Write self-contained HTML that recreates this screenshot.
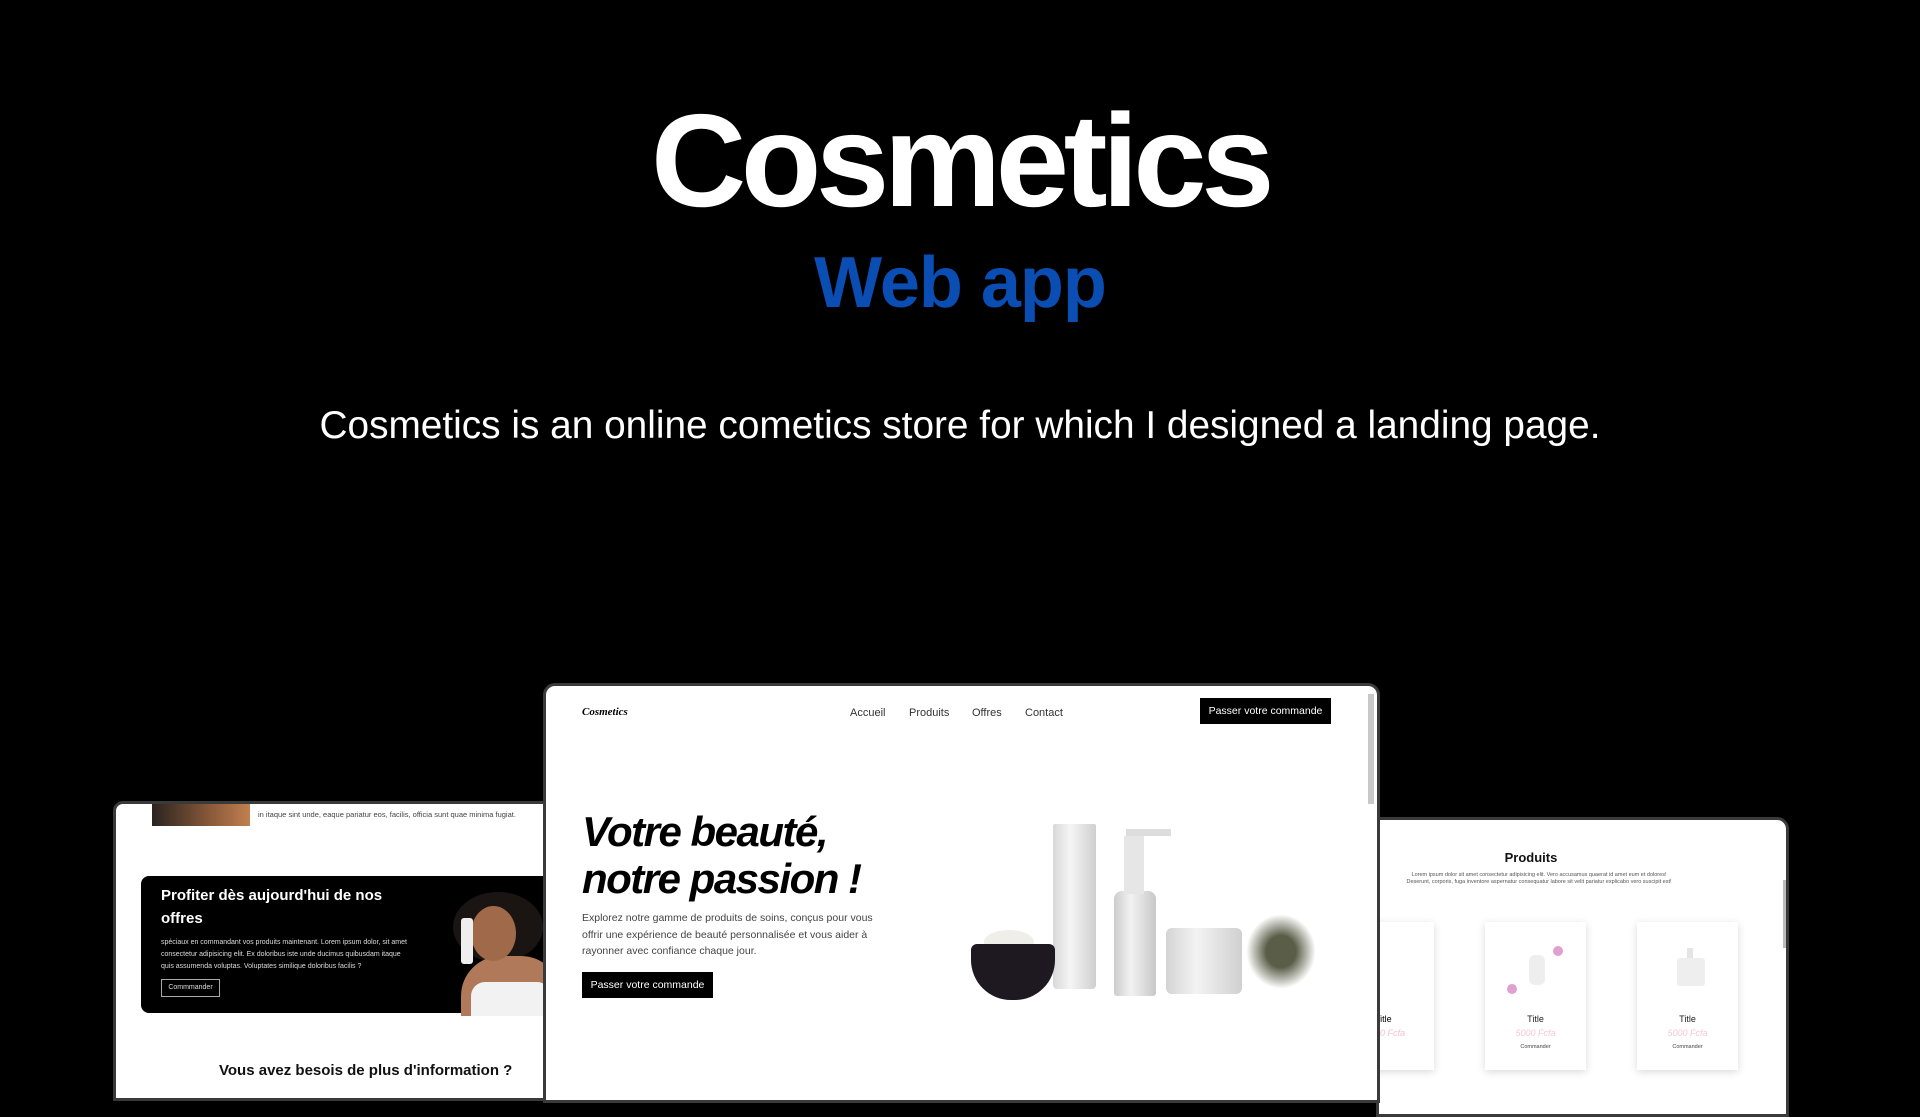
<!DOCTYPE html>
<html><head><meta charset="utf-8"><style>
*{margin:0;padding:0;box-sizing:border-box}
body{width:1920px;height:1080px;background:#000;overflow:hidden;position:relative;font-family:"Liberation Sans","DejaVu Sans",sans-serif}
.abs{position:absolute}
#t1{left:0;width:1920px;top:86px;text-align:center;color:#fff;font-weight:bold;font-size:132px;letter-spacing:-5.5px;line-height:150px}
#t2{left:0;width:1920px;top:238px;text-align:center;color:#0a4db3;font-weight:bold;font-size:72px;line-height:90px;letter-spacing:-1px}
#t3{left:0;width:1920px;top:398px;text-align:center;color:#fff;font-size:38.8px;line-height:56px}
.mock{background:#fff;border:3px solid #3a3a3a;overflow:hidden}
.nav{font-size:11px;color:#333}
</style></head><body>
<div class="abs" id="t1">Cosmetics</div>
<div class="abs" id="t2">Web app</div>
<div class="abs" id="t3">Cosmetics is an online cometics store for which I designed a landing page.</div>

<!-- left mock -->
<div class="abs mock" style="left:113px;top:801px;width:440px;height:300px;border-radius:10px 0 0 0">
  <div class="abs" style="left:36px;top:-10px;width:98px;height:32px;background:linear-gradient(90deg,#2a2320,#8a5a3a 60%,#c08050)"></div>
  <div class="abs" style="left:142px;top:6px;font-size:7.5px;color:#444;white-space:nowrap">in itaque sint unde, eaque pariatur eos, facilis, officia sunt quae minima fugiat.</div>
  <div class="abs" style="left:25px;top:72px;width:420px;height:137px;background:#000;border-radius:8px 0 0 8px">
    <div class="abs" style="left:20px;top:8px;color:#fff;font-weight:bold;font-size:15px;line-height:23px;width:240px">Profiter dès aujourd'hui de nos offres</div>
    <div class="abs" style="left:20px;top:61px;color:#ddd;font-size:7px;line-height:12px;width:250px">spéciaux en commandant vos produits maintenant. Lorem ipsum dolor, sit amet consectetur adipisicing elit. Ex doloribus iste unde ducimus quibusdam itaque quis assumenda voluptas. Voluptates similique doloribus facilis ?</div>
    <div class="abs" style="left:20px;top:103px;width:59px;height:18px;border:1px solid #aaa;color:#ddd;font-size:7px;line-height:16px;text-align:center">Commmander</div>
    <div class="abs" style="left:312px;top:16px;width:90px;height:70px;border-radius:50%;background:#1a1512"></div>
    <div class="abs" style="left:320px;top:80px;width:100px;height:60px;border-radius:40px 40px 0 0;background:#b07a5a"></div>
    <div class="abs" style="left:330px;top:106px;width:80px;height:34px;background:#f2f2f2;border-radius:14px 14px 0 0"></div>
    <div class="abs" style="left:330px;top:30px;width:45px;height:55px;border-radius:50%;background:#a06a4a"></div>
    <div class="abs" style="left:320px;top:42px;width:12px;height:46px;background:#eee;border-radius:3px"></div>
  </div>
  <div class="abs" style="left:103px;top:258px;font-weight:bold;font-size:15px;color:#111;white-space:nowrap">Vous avez besois de plus d'information ?</div>
</div>

<!-- right mock -->
<div class="abs mock" style="left:1376px;top:817px;width:413px;height:300px;border-radius:0 12px 0 0">
  <div class="abs" style="left:0;width:414px;top:30px;text-align:center;font-weight:bold;font-size:13px;color:#111;transform:translateX(-55px)">Produits</div>
  <div class="abs" style="left:20px;width:280px;top:52px;text-align:center;font-size:5.5px;line-height:7px;color:#555">Lorem ipsum dolor sit amet consectetur adipisicing elit. Vero accusamus quaerat id amet eum et dolores! Deserunt, corporis, fuga inventore aspernatur consequatur labore sit velit pariatur explicabo vero suscipit est!</div>
  <div class="abs" style="left:-40px;top:102px;width:95px;height:148px;background:#fff;box-shadow:0 2px 8px rgba(0,0,0,.15)">
    <div class="abs" style="left:36px;top:92px;font-size:9px;white-space:nowrap">Title</div>
    <div class="abs" style="left:26px;top:106px;font-size:9px;color:#f7c0cc;font-style:italic;white-space:nowrap">5000 Fcfa</div>
  </div>
  <div class="abs" style="left:106px;top:102px;width:101px;height:148px;background:#fff;box-shadow:0 2px 8px rgba(0,0,0,.15)">
    <div class="abs" style="left:44px;top:33px;width:16px;height:30px;background:#eee;border-radius:6px"></div>
    <div class="abs" style="left:68px;top:24px;width:10px;height:10px;border-radius:50%;background:#e0a0d0"></div>
    <div class="abs" style="left:22px;top:62px;width:10px;height:10px;border-radius:50%;background:#e0a0d0"></div>
    <div class="abs" style="left:0;width:101px;top:92px;text-align:center;font-size:9px;color:#222">Title</div>
    <div class="abs" style="left:0;width:101px;top:106px;text-align:center;font-size:9px;color:#f7c8d2;font-style:italic">5000 Fcfa</div>
    <div class="abs" style="left:0;width:101px;top:122px;text-align:center;font-size:5.5px;color:#444">Commander</div>
  </div>
  <div class="abs" style="left:258px;top:102px;width:101px;height:148px;background:#fff;box-shadow:0 2px 8px rgba(0,0,0,.15)">
    <div class="abs" style="left:40px;top:36px;width:28px;height:28px;background:#eee;border-radius:3px"></div>
    <div class="abs" style="left:50px;top:26px;width:6px;height:10px;background:#e5e5e5"></div>
    <div class="abs" style="left:0;width:101px;top:92px;text-align:center;font-size:9px;color:#222">Title</div>
    <div class="abs" style="left:0;width:101px;top:106px;text-align:center;font-size:9px;color:#f7c8d2;font-style:italic">5000 Fcfa</div>
    <div class="abs" style="left:0;width:101px;top:122px;text-align:center;font-size:5.5px;color:#444">Commander</div>
  </div>
  <div class="abs" style="left:404px;top:60px;width:4px;height:68px;background:#bbb"></div>
</div>

<!-- center mock -->
<div class="abs mock" style="left:543px;top:683px;width:837px;height:420px;border-radius:12px 12px 0 0">
  <div class="abs" style="left:822px;top:8px;width:6px;height:110px;background:#c8c8c8"></div>
  <div class="abs" style="left:36px;top:20px;font-family:'Liberation Serif',serif;font-style:italic;font-weight:bold;font-size:11px;color:#000">Cosmetics</div>
  <div class="abs nav" style="left:304px;top:21px">Accueil</div>
  <div class="abs nav" style="left:363px;top:21px">Produits</div>
  <div class="abs nav" style="left:426px;top:21px">Offres</div>
  <div class="abs nav" style="left:479px;top:21px">Contact</div>
  <div class="abs" style="left:654px;top:12px;width:131px;height:26px;background:#000;color:#fff;font-size:10.5px;line-height:26px;text-align:center">Passer votre commande</div>
  <div class="abs" style="left:36px;top:122px;font-weight:bold;font-style:italic;font-size:42px;line-height:47px;letter-spacing:-1.5px;color:#000">Votre beauté,<br>notre passion !</div>
  <div class="abs" style="left:36px;top:224px;font-size:10.5px;line-height:16.5px;color:#444;width:300px">Explorez notre gamme de produits de soins, conçus pour vous offrir une expérience de beauté personnalisée et vous aider à rayonner avec confiance chaque jour.</div>
  <div class="abs" style="left:36px;top:286px;width:131px;height:26px;background:#000;color:#fff;font-size:10.5px;line-height:26px;text-align:center">Passer votre commande</div>
  <!-- product art -->
  <div class="abs" style="left:507px;top:138px;width:43px;height:165px;background:linear-gradient(90deg,#d8d8d8,#f5f5f5 40%,#cfcfcf);border-radius:2px 2px 4px 4px"></div>
  <div class="abs" style="left:568px;top:205px;width:42px;height:105px;background:linear-gradient(90deg,#ccc,#f2f2f2 40%,#c8c8c8);border-radius:8px 8px 3px 3px"></div>
  <div class="abs" style="left:578px;top:150px;width:20px;height:58px;background:#e6e6e6"></div>
  <div class="abs" style="left:580px;top:143px;width:45px;height:7px;background:#ddd"></div>
  <div class="abs" style="left:620px;top:242px;width:76px;height:66px;background:linear-gradient(90deg,#d4d4d4,#f3f3f3 40%,#d0d0d0);border-radius:6px"></div>
  <div class="abs" style="left:438px;top:244px;width:50px;height:24px;background:#f0eee8;border-radius:50% 50% 0 0"></div>
  <div class="abs" style="left:425px;top:258px;width:84px;height:56px;background:#1e1820;border-radius:6px 6px 40px 40px"></div>
  <div class="abs" style="left:700px;top:228px;width:70px;height:75px;background:radial-gradient(ellipse,#5a5e48 30%,rgba(90,94,72,0) 70%)"></div>
</div>
</body></html>
